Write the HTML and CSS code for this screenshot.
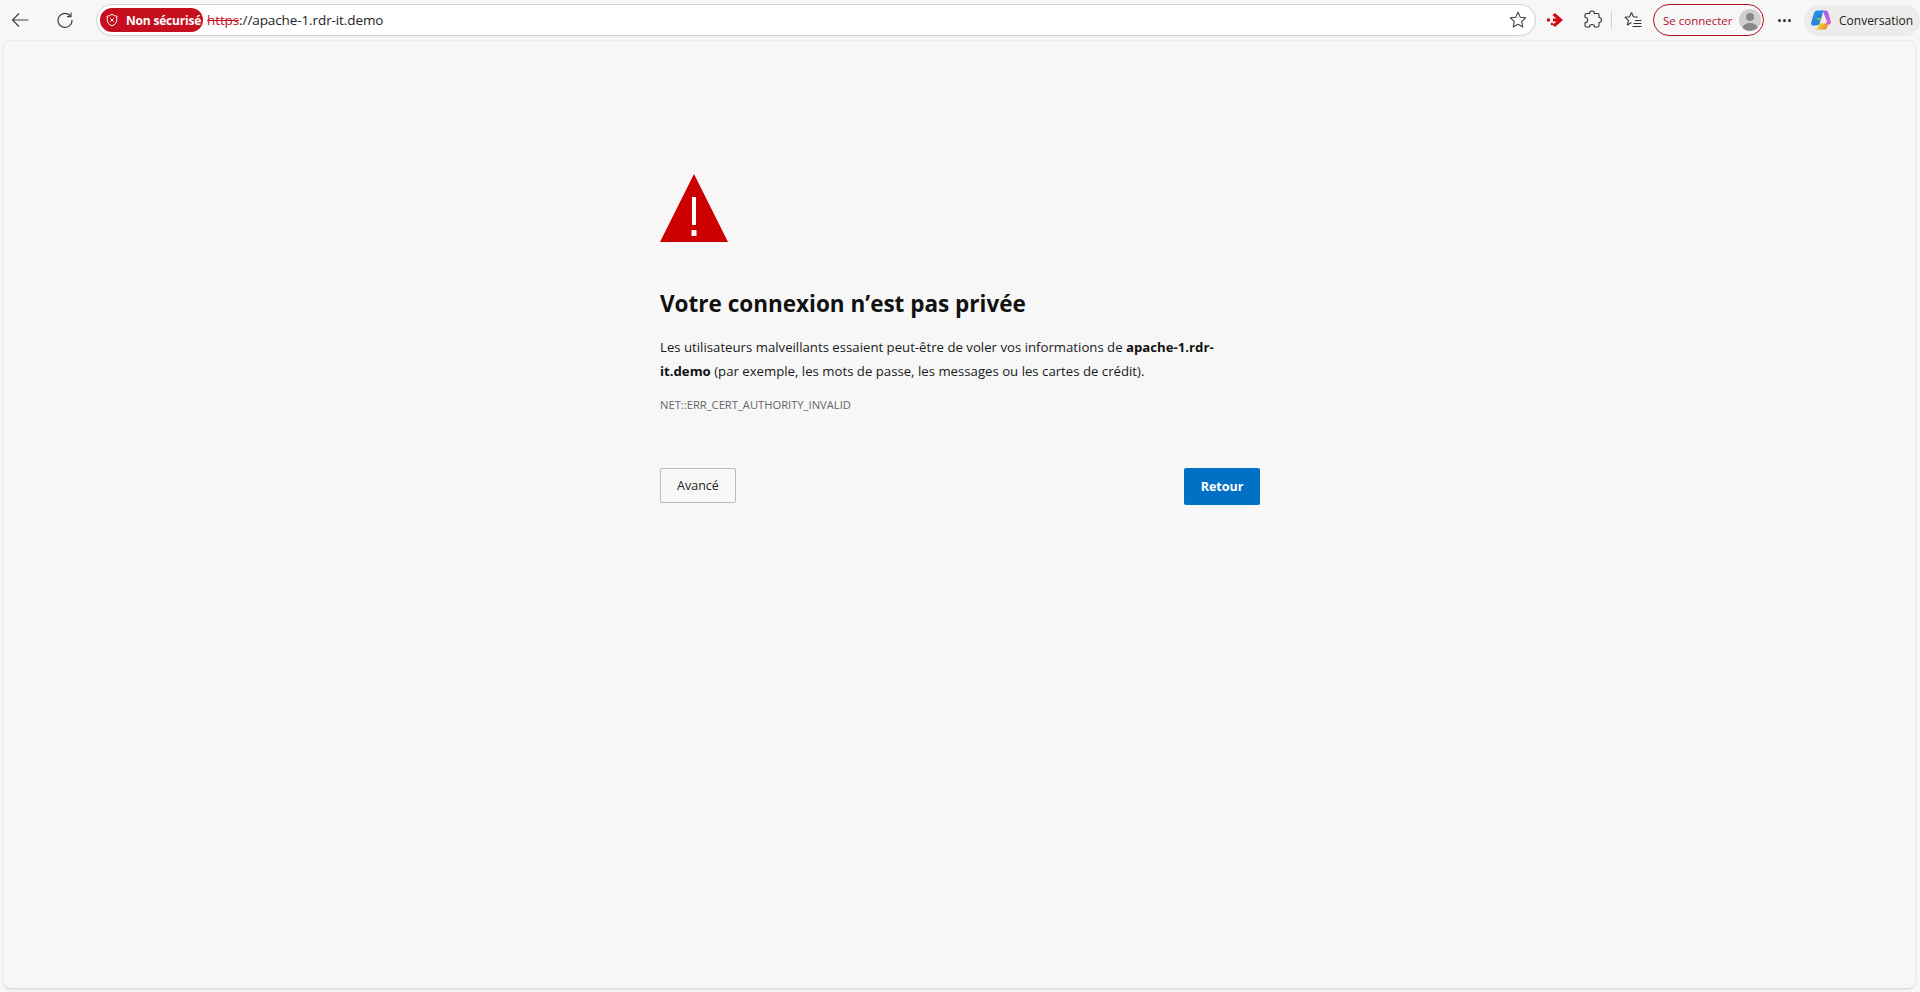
FILE: index.html
```html
<!DOCTYPE html>
<html lang="fr">
<head>
<meta charset="utf-8">
<title>Erreur de confidentialité</title>
<link rel="stylesheet" href="styles.css">
</head>
<body>
<header class="toolbar">
  <button class="nav-btn back" aria-label="Retour">
    <svg width="20" height="20" viewBox="0 0 20 20"><path d="M18.5 10H2.5M9 3.5 2.5 10 9 16.5" fill="none" stroke="#444" stroke-width="1.2"/></svg>
  </button>
  <button class="nav-btn reload" aria-label="Actualiser">
    <svg width="18" height="18" viewBox="0 0 18 18"><path d="M14.6 5.2A7 7 0 1 0 16 9" fill="none" stroke="#444" stroke-width="1.2"/><path d="M15 1.5V5.6H10.9" fill="none" stroke="#444" stroke-width="1.2"/></svg>
  </button>
  <div class="omnibox">
    <div class="badge">
      <svg width="14" height="14" viewBox="0 0 14 14"><path d="M7 1.2c1.5 1.2 3 1.8 4.8 1.9v3.6c0 3-1.8 5-4.8 6.1-3-1.1-4.8-3.1-4.8-6.1V3.100C4 3 5.500 2.400 7 1.200Z" fill="none" stroke="#fff" stroke-width="1"/><path d="M5.300 5.300l3.400 3.400M8.700 5.300 5.300 8.700" stroke="#fff" stroke-width="1"/></svg>
      <span>Non sécurisé</span>
    </div>
    <div class="url"><s class="scheme">https</s><span class="rest">://apache-1.rdr-it.demo</span></div>
    <svg class="star" width="20" height="20" viewBox="0 0 20 20"><path d="M10 2.300l2.300 5 5.400.6-4 3.700 1.100 5.400L10 14.300 5.200 17l1.100-5.400-4-3.700 5.400-.6Z" fill="none" stroke="#444" stroke-width="1.100" stroke-linejoin="round"/></svg>
  </div>
  <div class="tools">
    <svg class="tool-red" width="20" height="16" viewBox="0 0 20 16"><path d="M10 1 18 8l-8 7-2.500-2.200L11.500 9.500H8V6.500h3.500L7.500 3.200Z" fill="#d00b16"/><rect x="2" y="6.500" width="3" height="3" fill="#d00b16"/><circle cx="7" cy="12" r="1.300" fill="#d00b16"/></svg>
    <svg class="tool-puzzle" width="20" height="20" viewBox="0 0 20 20"><path d="M7.500 3.500a2.500 2.500 0 0 1 5 0h3.500a1 1 0 0 1 1 1v3a2.500 2.500 0 0 1 0 5v3a1.500 1.500 0 0 1-1.500 1.500H12.500a2.500 2.500 0 0 0-5 0H4.500A1.500 1.500 0 0 1 3 15.500V12.700a2.700 2.700 0 0 0 0-5.400V5a1.500 1.500 0 0 1 1.500-1.500Z" fill="none" stroke="#333" stroke-width="1.100"/></svg>
    <span class="divider"></span>
    <svg class="tool-fav" width="20" height="20" viewBox="0 0 20 20"><path d="M8.500 2.500l1.900 4.200 4.400.5M8.500 2.500 6.600 6.700l-4.600.5 3.400 3.100-.9 4.600 4-2.300" fill="none" stroke="#333" stroke-width="1.100" stroke-linejoin="round"/><path d="M12 10.500h6.500M10.500 13.500h8M9.500 16.500h9" stroke="#333" stroke-width="1.100"/></svg>
    <div class="signin">
      <span>Se connecter</span>
      <svg class="avatar" width="22" height="22" viewBox="0 0 22 22"><circle cx="11" cy="11" r="11" fill="#d2d0ce"/><circle cx="11" cy="8" r="4" fill="#8a8886"/><path d="M3.500 19c.8-3.500 3.500-5 7.500-5s6.700 1.500 7.500 5a11 11 0 0 1-15 0Z" fill="#8a8886"/></svg>
    </div>
    <div class="more"><i></i><i></i><i></i></div>
    <div class="copilot">
      <svg width="22" height="22" viewBox="0 0 22 22">
        <defs>
          <linearGradient id="cpa" x1="0" y1="0" x2="1" y2="1"><stop offset="0" stop-color="#1c9ee8"/><stop offset="1" stop-color="#2f6fe0"/></linearGradient>
          <linearGradient id="cpb" x1="0" y1="0" x2="1" y2="1"><stop offset="0" stop-color="#58b947"/><stop offset=".55" stop-color="#f4c430"/><stop offset="1" stop-color="#f0702a"/></linearGradient>
          <linearGradient id="cpc" x1="0" y1="0" x2="1" y2="1"><stop offset="0" stop-color="#8a6cf0"/><stop offset="1" stop-color="#e85ac0"/></linearGradient>
        </defs>
        <path d="M7 1.500h6.500L10 13.500c-.6 2-2 3-3.500 3H3C1.500 16.500.8 15 1.200 13.500L4 4C4.500 2.500 5.500 1.500 7 1.500Z" fill="url(#cpa)"/>
        <path d="M4.500 9h6L9 16c-.5 2.500-2 4.500-4 4.500h9c2 0 3-1 3.500-3l.8-3H12c-2 0-3-1-2.500-3" fill="url(#cpb)"/>
        <path d="M12 1.500h3.500c1.500 0 2.500 1 3 2.500l2.300 8.500c.4 1.500-.3 3-1.800 3h-5c1.500 0 2.500-1 3-3L14 5c-.3-1.500-1-3.500-2-3.500Z" fill="url(#cpc)"/>
      </svg>
      <span>Conversation</span>
    </div>
  </div>
</header>
<main class="panel">
  <div class="content">
    <svg class="warning" width="68" height="68" viewBox="0 0 68 68" role="img" aria-label="Avertissement">
      <path d="M34 0 68 68H0Z" fill="#cd0000"/>
      <rect x="32" y="23" width="4" height="28" fill="#fff"/>
      <rect x="31.500" y="56" width="5" height="6" fill="#fff"/>
    </svg>
    <h1>Votre connexion n’est pas privée</h1>
    <p class="desc">Les utilisateurs malveillants essaient peut-être de voler vos informations de <b>apache-1.rdr-<br>it.demo</b> (par exemple, les mots de passe, les messages ou les cartes de crédit).</p>
    <p class="code">NET::ERR_CERT_AUTHORITY_INVALID</p>
    <div class="actions">
      <button class="btn-secondary">Avancé</button>
      <button class="btn-primary">Retour</button>
    </div>
  </div>
</main>
</body>
</html>
```

FILE: styles.css
```css
* { box-sizing: border-box; }
html, body { margin: 0; height: 100%; }
body {
  background: #f7f7f7;
  font-family: "Open Sans", "Noto Sans", sans-serif;
  color: #111;
  display: flex;
  flex-direction: column;
  height: 992px;
  overflow: hidden;
}
button { font-family: inherit; }
.toolbar {
  height: 40px;
  flex: none;
  display: flex;
  align-items: center;
  padding-left: 10px;
  padding-top: 0;
}
.nav-btn {
  border: 0;
  background: none;
  padding: 0;
  display: flex;
  align-items: center;
  justify-content: center;
}
.back { width: 20px; height: 20px; }
.reload { width: 18px; height: 18px; margin-left: 26px; }
.omnibox {
  width: 1458px;
  height: 32px;
  margin-left: 22px;
  border: 1px solid #d3d3d3;
  border-radius: 16px;
  background: #fff;
  display: flex;
  align-items: center;
  padding: 0 3px;
  box-shadow: 0 1px 1px rgba(0,0,0,.04);
}
.badge {
  width: 103px;
  height: 24px;
  border-radius: 12px;
  background: #c50f1f;
  color: #fff;
  display: flex;
  align-items: center;
  padding-left: 5px;
  gap: 7px;
  font-size: 12px;
  font-weight: 700;
  white-space: nowrap;
  letter-spacing: -.2px;
}
.badge svg { flex: none; }
.url {
  margin-left: 4px;
  font-size: 13.500px;
  white-space: nowrap;
  flex: 1;
  letter-spacing: -.1px;
}
.scheme { color: #c50f1f; text-decoration: line-through; }
.rest { color: #222; }
.star { flex: none; margin-right: 4px; }
.tools {
  display: flex;
  align-items: center;
  flex: 1;
}
.tool-red { margin-left: 9px; flex: none; }
.tool-puzzle { margin-left: 17px; flex: none; }
.divider { width: 1px; height: 18px; background: #d0d0d0; margin-left: 9px; flex: none; }
.tool-fav { margin-left: 11px; flex: none; }
.signin {
  width: 111px;
  height: 32px;
  margin-left: 10px;
  border: 1px solid #b3111f;
  border-radius: 16px;
  display: flex;
  align-items: center;
  justify-content: space-between;
  padding: 0 2px 0 9px;
  color: #b3111f;
  font-size: 11.500px;
  white-space: nowrap;
  flex: none;
}
.more {
  display: flex;
  gap: 2px;
  margin-left: 14px;
  flex: none;
}
.more i { width: 3px; height: 3px; border-radius: 50%; background: #333; }
.copilot {
  width: 116px;
  height: 31px;
  margin-left: 13px;
  border-radius: 16px;
  background: #ececec;
  display: flex;
  align-items: center;
  padding-left: 6px;
  gap: 7px;
  font-size: 12px;
  color: #222;
  white-space: nowrap;
  flex: none;
}
.copilot svg { flex: none; }
.panel {
  height: 949px;
  margin: 0 4px 0 3px;
  flex: none;
  background: #f7f7f7;
  border: 1px solid #ececec;
  border-bottom-color: #dcdcdc;
  border-radius: 8px;
  box-shadow: 0 1px 2px rgba(0,0,0,.08);
  padding: 133px 0 0 656px;
}
.content { width: 600px; }
.warning { display: block; }
h1 {
  margin: 46px 0 0;
  font-size: 22.500px;
  line-height: 32px;
  font-weight: 700;
  color: #111;
  white-space: nowrap;
}
.desc {
  margin: 15px 0 0;
  font-size: 13.200px;
  line-height: 24px;
  color: #1a1a1a;
  white-space: nowrap;
}
.desc b { font-weight: 700; color: #111; }
.code {
  margin: 14px 0 0;
  font-size: 11.200px;
  line-height: 16px;
  color: #666;
  white-space: nowrap;
}
.actions {
  display: flex;
  justify-content: space-between;
  align-items: flex-start;
  margin-top: 55px;
}
.btn-secondary {
  width: 76px;
  height: 35px;
  border: 1px solid #bbb;
  border-radius: 2px;
  background: #f7f7f7;
  color: #222;
  font-size: 12.500px;
  padding: 0;
}
.btn-primary {
  width: 76px;
  height: 37px;
  border: 0;
  border-radius: 2px;
  background: #0071c5;
  color: #fff;
  font-size: 12.500px;
  font-weight: 700;
  padding: 0;
}
```
